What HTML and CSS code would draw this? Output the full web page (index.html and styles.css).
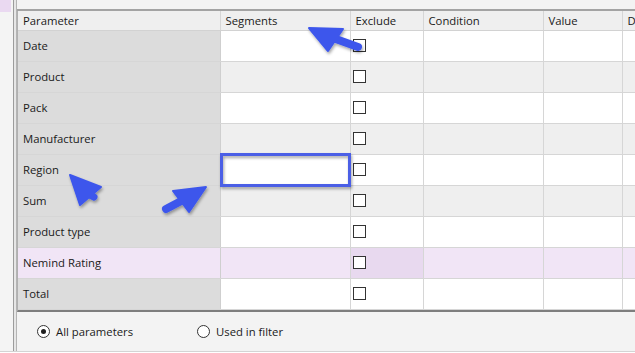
FILE: index.html
```html
<!DOCTYPE html>
<html lang="en">
<head>
    <meta charset="UTF-8">
    <title>Parameters</title>
    <link rel="stylesheet" href="styles.css">
</head>
<body>
    <div class="window">
        <div class="sidebar">
            <div class="sidebar-tab"></div>
        </div>
        <div class="splitter"></div>
        <div class="main">
            <div class="topbar"></div>
            <div class="grid-wrap">
                <table class="grid">
                    <colgroup>
                        <col class="c-param">
                        <col class="c-seg">
                        <col class="c-excl">
                        <col class="c-cond">
                        <col class="c-val">
                        <col class="c-d">
                    </colgroup>
                    <thead>
                        <tr>
                            <th>Parameter</th>
                            <th>Segments</th>
                            <th>Exclude</th>
                            <th>Condition</th>
                            <th>Value</th>
                            <th>D</th>
                        </tr>
                    </thead>
                    <tbody>
                        <tr><td class="param">Date</td><td></td><td><span class="check"></span></td><td></td><td></td><td></td></tr>
                        <tr class="alt"><td class="param">Product</td><td></td><td><span class="check"></span></td><td></td><td></td><td></td></tr>
                        <tr><td class="param">Pack</td><td></td><td><span class="check"></span></td><td></td><td></td><td></td></tr>
                        <tr class="alt"><td class="param">Manufacturer</td><td></td><td><span class="check"></span></td><td></td><td></td><td></td></tr>
                        <tr><td class="param">Region</td><td></td><td><span class="check"></span></td><td></td><td></td><td></td></tr>
                        <tr class="alt"><td class="param">Sum</td><td></td><td><span class="check"></span></td><td></td><td></td><td></td></tr>
                        <tr><td class="param">Product type</td><td></td><td><span class="check"></span></td><td></td><td></td><td></td></tr>
                        <tr class="selected"><td class="param">Nemind Rating</td><td></td><td class="focus"><span class="check"></span></td><td></td><td></td><td></td></tr>
                        <tr><td class="param">Total</td><td></td><td><span class="check"></span></td><td></td><td></td><td></td></tr>
                    </tbody>
                </table>
            </div>
            <div class="footer">
                <label class="radio"><span class="dot on"></span>All parameters</label>
                <label class="radio"><span class="dot"></span>Used in filter</label>
            </div>
        </div>
    </div>

    <svg class="marks" width="635" height="353" viewBox="0 0 635 353">
        <defs>
            <filter id="shade" x="-30%" y="-30%" width="160%" height="160%">
                <feDropShadow dx="1" dy="2" stdDeviation="1.6" flood-color="#000" flood-opacity="0.35"/>
            </filter>
        </defs>
        <rect x="221.5" y="154.5" width="128" height="31" fill="none" stroke="#4b5fe6" stroke-width="3" filter="url(#shade)"/>
        <g fill="#3d57ec" stroke="#3d57ec" filter="url(#shade)">
            <polygon points="309,28 343,29 328,51" stroke-linejoin="round" stroke-width="2"/>
            <line x1="333" y1="38" x2="358" y2="47" stroke-width="8" stroke-linecap="round"/>

            <polygon points="70,175 101,187 80,205" stroke-linejoin="round" stroke-width="2"/>
            <line x1="86" y1="193" x2="94" y2="197" stroke-width="7" stroke-linecap="round"/>

            <polygon points="206,187 173,191 189,212" stroke-linejoin="round" stroke-width="2"/>
            <line x1="183" y1="200" x2="166" y2="209" stroke-width="8" stroke-linecap="round"/>
        </g>
    </svg>
</body>
</html>
```

FILE: styles.css
```css
body {
    margin: 0;
    background: #ffffff;
    font-family: "Open Sans", "Noto Sans", sans-serif;
    font-size: 11.3px;
    color: #1a1a1a;
}
.window {
    display: flex;
    width: 635px;
    height: 352px;
    border-bottom: 1px solid #d4d4d4;
    box-sizing: border-box;
    background: #f3f3f3;
    overflow: hidden;
}
.sidebar {
    width: 13px;
    flex: none;
    background: #f4f4f4;
}
.sidebar-tab {
    width: 11px;
    height: 12px;
    background: #ead9f1;
}
.splitter {
    width: 2px;
    flex: none;
    border-left: 1px solid #9c9c9c;
    border-right: 1px solid #b4b4b4;
    background: #e6e6e6;
}
.main {
    flex: 1;
    display: flex;
    flex-direction: column;
    min-width: 0;
}
.topbar {
    height: 9px;
    flex: none;
    background: #f3f3f3;
    border-bottom: 2px solid #a3a3a3;
}
.grid-wrap {
    flex: none;
    border-left: 1px solid #b0b0b0;
    border-bottom: 2px solid #7e7e7e;
    background: #ffffff;
}
.grid {
    border-collapse: collapse;
    table-layout: fixed;
    width: 640px;
}
.c-param { width: 202px; }
.c-seg { width: 130px; }
.c-excl { width: 73px; }
.c-cond { width: 120px; }
.c-val { width: 79px; }
.c-d { width: 36px; }

.grid th {
    height: 19px;
    padding: 0 0 0 5px;
    line-height: 19px;
    text-align: left;
    font-weight: normal;
    background: #efefef;
    border-right: 1px solid #d6d6d6;
    border-bottom: 1px solid #d2d2d2;
    white-space: nowrap;
    overflow: hidden;
}
.grid td {
    height: 30px;
    padding: 0 0 0 4px;
    line-height: 16px;
    background: #ffffff;
    border-right: 1px solid #d6d6d6;
    border-bottom: 1px solid #d6d6d6;
    vertical-align: middle;
}
.grid tr.alt td {
    background: #efefef;
}
.grid tr td.param {
    background: #dcdcdc;
    border-right-color: #cfcfcf;
    padding-left: 5px;
}
.grid tr.selected td,
.grid tr.selected td.param {
    background: #f1e5f6;
}
.grid tr.selected td.focus {
    background: #e8d9ef;
}
.check {
    display: block;
    width: 11px;
    height: 11px;
    border: 1px solid #333333;
    background: #ffffff;
    margin: -1px 0 0 -2px;
}
.footer {
    flex: 1;
    display: flex;
    align-items: center;
    padding: 0 0 1px 20px;
    background: #f3f3f3;
}
.radio {
    display: flex;
    align-items: center;
    gap: 6px;
}
.radio + .radio {
    margin-left: 64px;
}
.dot {
    width: 11px;
    height: 11px;
    border: 1px solid #333333;
    border-radius: 50%;
    background: #ffffff;
    position: relative;
}
.dot.on::after {
    content: "";
    position: absolute;
    left: 3px;
    top: 3px;
    width: 5px;
    height: 5px;
    border-radius: 50%;
    background: #1e1e1e;
}
.marks {
    position: absolute;
    left: 0;
    top: 0;
    pointer-events: none;
}
```
